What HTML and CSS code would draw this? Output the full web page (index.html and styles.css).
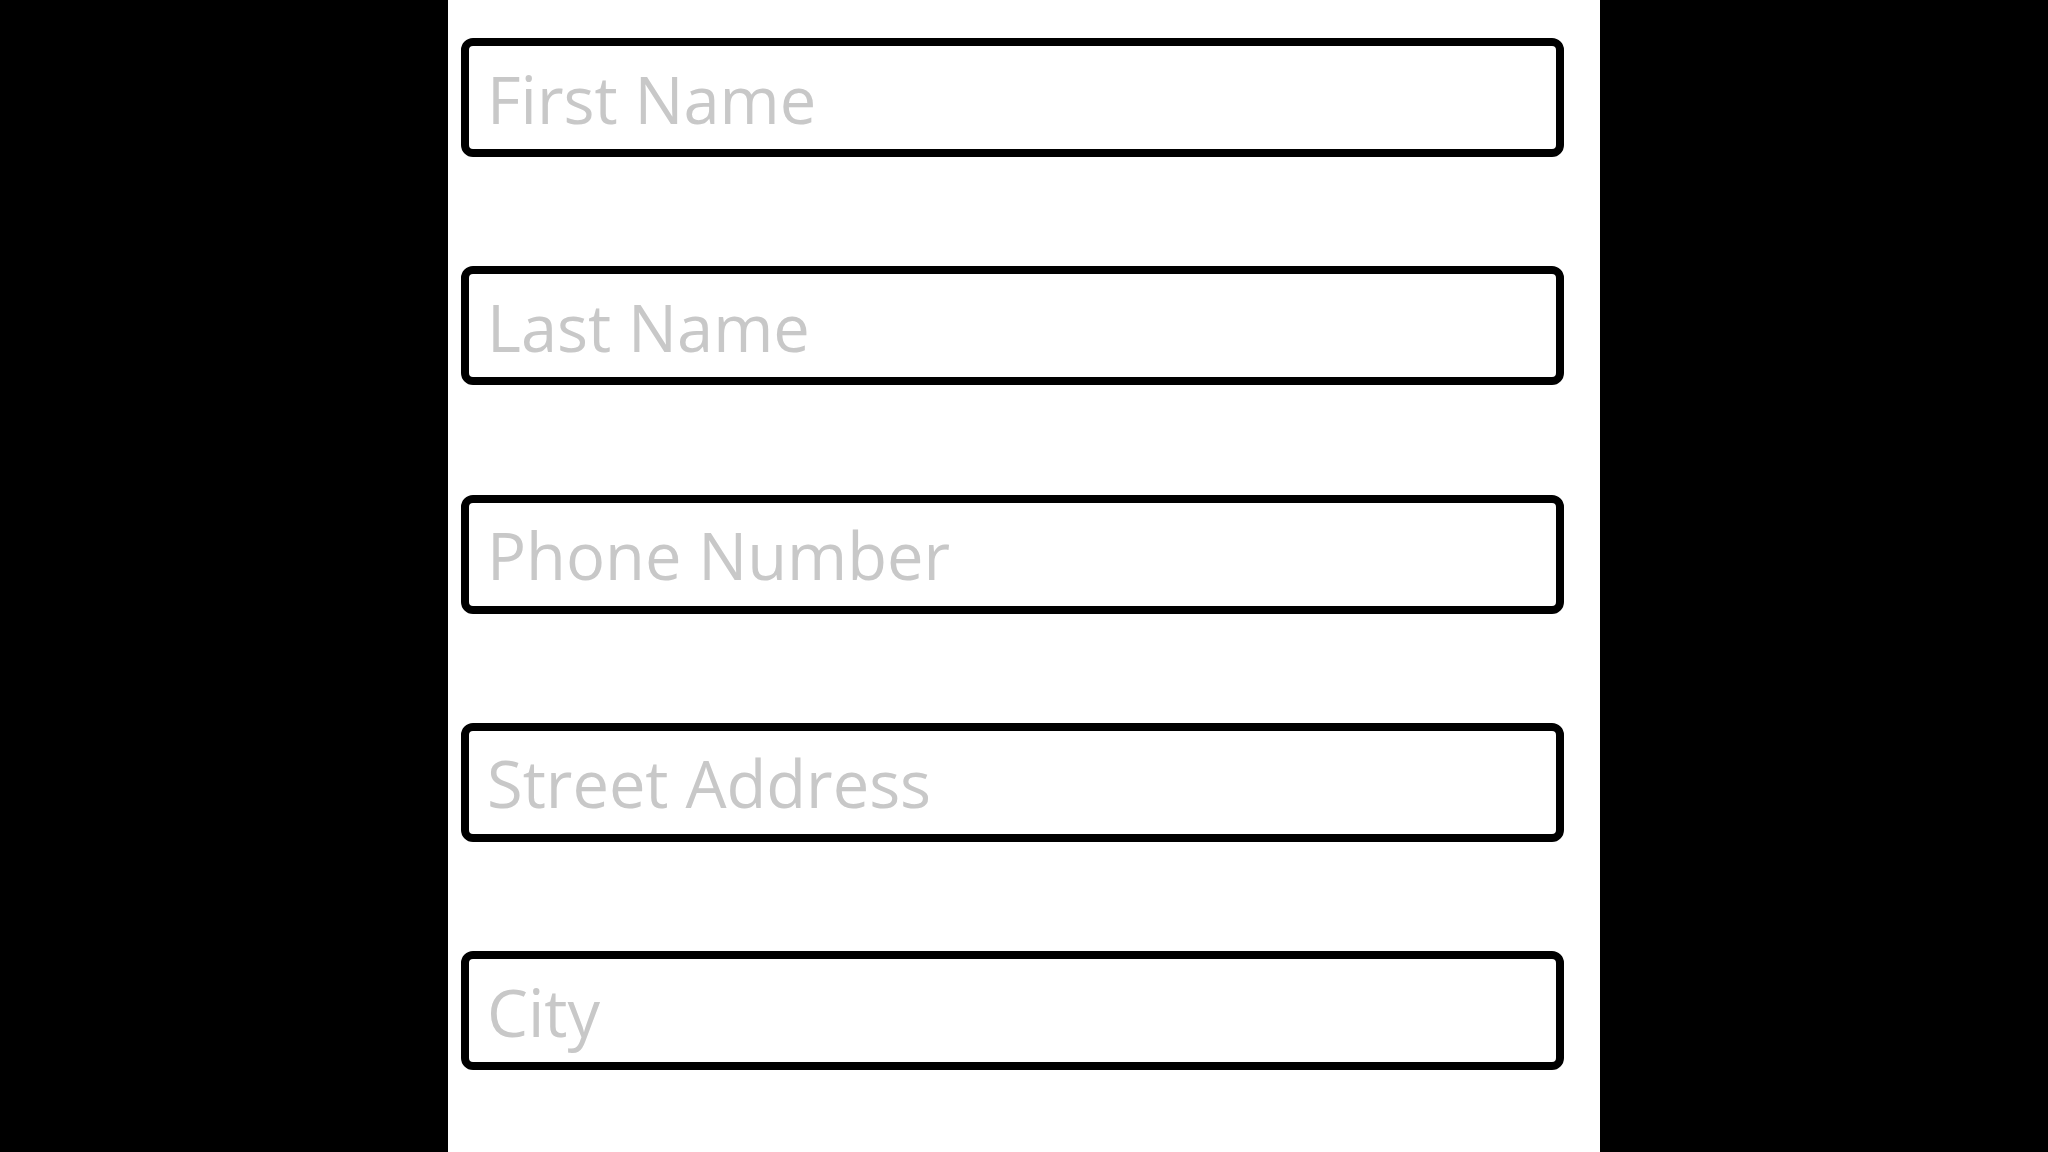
FILE: index.html
```html
<!DOCTYPE html>
<html lang="en">
<head>
  <meta charset="UTF-8">
  <title>Contact Form</title>
  <meta name="viewport" content="width=device-width, initial-scale=1.0">
  <link rel="stylesheet" href="styles.css">
</head>
<body>
  <div class="form-page">
    <form class="contact-form">
      <input class="text-field" type="text" placeholder="First Name" aria-label="First Name">
      <input class="text-field" type="text" placeholder="Last Name" aria-label="Last Name">
      <input class="text-field" type="tel" placeholder="Phone Number" aria-label="Phone Number">
      <input class="text-field" type="text" placeholder="Street Address" aria-label="Street Address">
      <input class="text-field" type="text" placeholder="City" aria-label="City">
    </form>
  </div>
</body>
</html>
```

FILE: styles.css
```css
html, body {
  height: 100%;
  margin: 0;
  background: #000;
}
body {
  display: flex;
  justify-content: center;
}
.form-page {
  width: 1152px;
  height: 100vh;
  background: #fff;
  box-sizing: border-box;
  padding: 38px 36px 0 13px;
  overflow: hidden;
}
.contact-form {
  display: flex;
  flex-direction: column;
  gap: 109.3px;
  margin: 0;
}
.text-field {
  display: block;
  width: 100%;
  height: 119px;
  box-sizing: border-box;
  margin: 0;
  padding: 2px 0 0 18px;
  border: 8px solid #000;
  border-radius: 12px;
  background: #fff;
  font-family: "Open Sans", "Noto Sans", sans-serif;
  font-size: 65px;
  color: #222;
  outline: none;
}
.text-field::placeholder {
  color: #c8c8c8;
  opacity: 1;
}
```
